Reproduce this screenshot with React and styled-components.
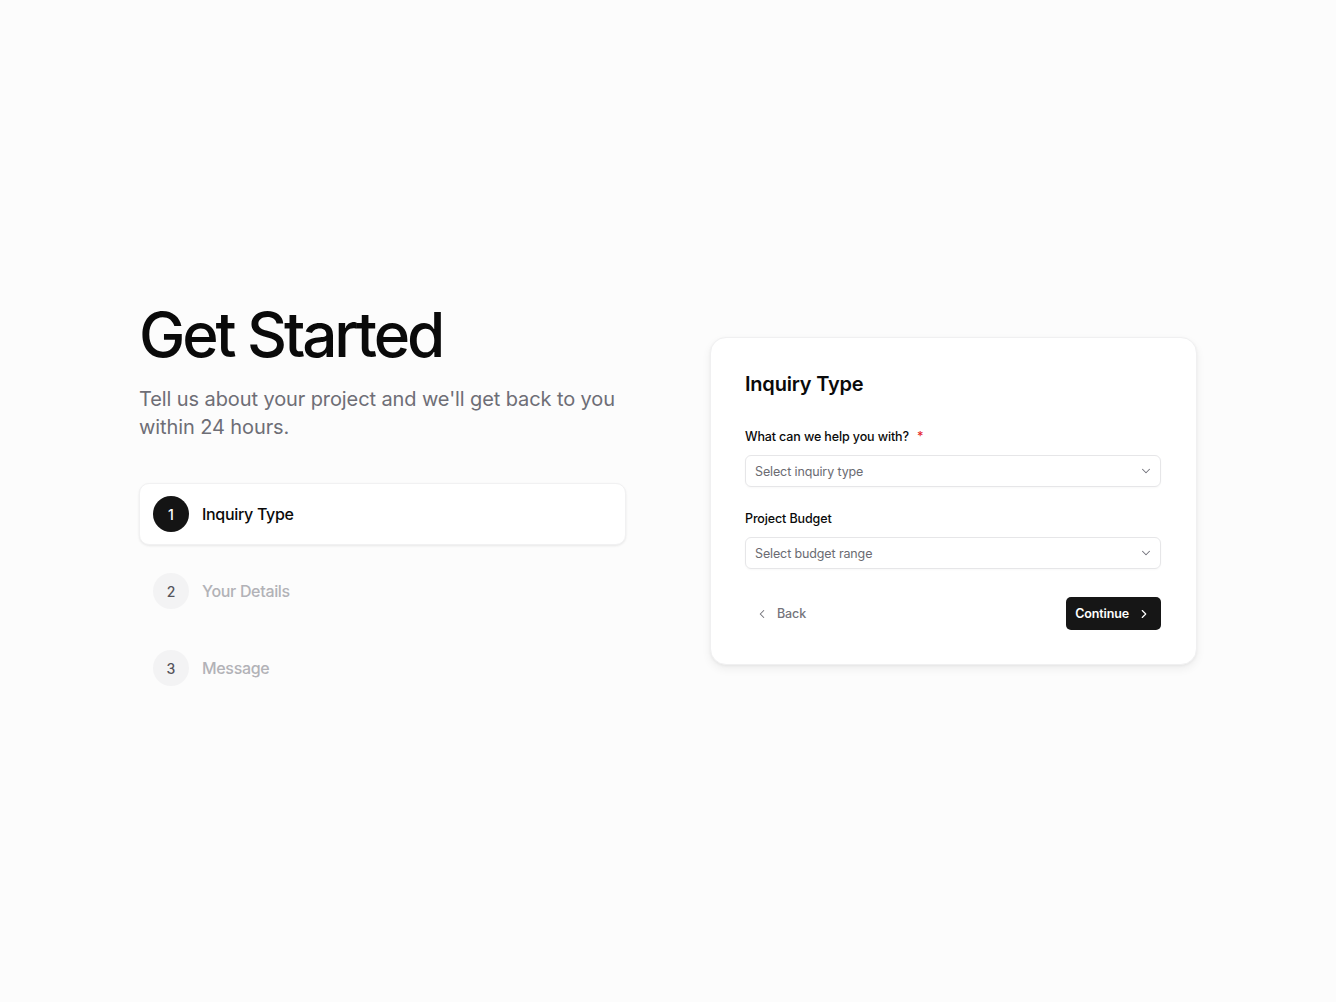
import React from "react";
import styled, { createGlobalStyle } from "styled-components";
import { ChevronDown, ChevronLeft, ChevronRight } from "lucide-react";

const GlobalStyle = createGlobalStyle`
  html, body {
    margin: 0;
    padding: 0;
    background: #fcfcfc;
    font-family: Inter, "Noto Sans", sans-serif;
    color: #0a0a0a;
    -webkit-font-smoothing: antialiased;
  }
  * { box-sizing: border-box; }
`;

const steps = [
  { id: 1, label: "Inquiry Type" },
  { id: 2, label: "Your Details" },
  { id: 3, label: "Message" },
];

const App = () => {
  const current = 1;
  return (
    <>
      <GlobalStyle />
      <StPage>
        <StLayout>
          <StIntro>
            <StTitle>Get Started</StTitle>
            <StLead>
              Tell us about your project and we'll get back to you within 24
              hours.
            </StLead>
            <StSteps>
              {steps.map((step) => (
                <StStep key={step.id} active={step.id === current}>
                  <StStepNum active={step.id === current}>{step.id}</StStepNum>
                  <StStepLabel active={step.id === current}>
                    {step.label}
                  </StStepLabel>
                </StStep>
              ))}
            </StSteps>
          </StIntro>

          <StCard>
            <StCardTitle>Inquiry Type</StCardTitle>
            <StField>
              <StLabel>
                What can we help you with?<StRequired>*</StRequired>
              </StLabel>
              <StSelect>
                <span>Select inquiry type</span>
                <ChevronDown size={14} strokeWidth={1.8} />
              </StSelect>
            </StField>
            <StField>
              <StLabel>Project Budget</StLabel>
              <StSelect>
                <span>Select budget range</span>
                <ChevronDown size={14} strokeWidth={1.8} />
              </StSelect>
            </StField>
            <StFooter>
              <StBack>
                <ChevronLeft size={14} strokeWidth={1.8} />
                Back
              </StBack>
              <StContinue>
                Continue
                <ChevronRight size={14} strokeWidth={2} />
              </StContinue>
            </StFooter>
          </StCard>
        </StLayout>
      </StPage>
    </>
  );
};

export default App;

const StPage = styled.div`
  min-height: 100vh;
  display: flex;
  align-items: center;
  justify-content: center;
`;

const StLayout = styled.div`
  width: 1058px;
  display: grid;
  grid-template-columns: 487px 487px;
  justify-content: space-between;
  align-items: center;
`;

const StIntro = styled.div`
  display: flex;
  flex-direction: column;
`;

const StTitle = styled.h1`
  margin: 0;
  font-size: 62px;
  line-height: 64px;
  font-weight: 500;
  letter-spacing: -0.05em;
  color: #0a0a0a;
`;

const StLead = styled.p`
  margin: 18px 0 0;
  font-size: 20px;
  line-height: 28px;
  color: #6e6e76;
  letter-spacing: -0.005em;
`;

const StSteps = styled.div`
  margin-top: 42px;
  display: flex;
  flex-direction: column;
  gap: 15px;
`;

const StStep = styled.div`
  display: flex;
  align-items: center;
  gap: 13px;
  padding: 12px 13px;
  border-radius: 10px;
  border: 1px solid ${({ active }) => (active ? "#f1f1f2" : "transparent")};
  background: ${({ active }) => (active ? "#ffffff" : "transparent")};
  box-shadow: ${({ active }) =>
    active ? "0 1px 3px rgba(0,0,0,0.06), 0 1px 2px rgba(0,0,0,0.03)" : "none"};
`;

const StStepNum = styled.div`
  width: 36px;
  height: 36px;
  border-radius: 50%;
  display: flex;
  align-items: center;
  justify-content: center;
  font-size: 14px;
  font-weight: 500;
  background: ${({ active }) => (active ? "#141414" : "#f3f3f4")};
  color: ${({ active }) => (active ? "#ffffff" : "#55555c")};
`;

const StStepLabel = styled.span`
  font-size: 16px;
  font-weight: 500;
  letter-spacing: -0.02em;
  color: ${({ active }) => (active ? "#0a0a0a" : "#b2b2b7")};
`;

const StCard = styled.div`
  background: #ffffff;
  border: 1px solid #f0f0f1;
  border-radius: 16px;
  padding: 33px 35px 34px 34px;
  box-shadow: 0 4px 10px rgba(0, 0, 0, 0.06), 0 1px 3px rgba(0, 0, 0, 0.05);
`;

const StCardTitle = styled.h2`
  margin: 0 0 30px;
  font-size: 20px;
  line-height: 26px;
  font-weight: 600;
  letter-spacing: -0.01em;
`;

const StField = styled.div`
  display: flex;
  flex-direction: column;
  gap: 8px;
  & + & {
    margin-top: 22px;
  }
`;

const StLabel = styled.label`
  font-size: 12.5px;
  line-height: 20px;
  font-weight: 500;
  letter-spacing: -0.01em;
  color: #0a0a0a;
`;

const StRequired = styled.span`
  color: #e5252a;
  margin-left: 8px;
`;

const StSelect = styled.div`
  height: 32px;
  display: flex;
  align-items: center;
  justify-content: space-between;
  padding: 0 7px 0 9px;
  border: 1px solid #e6e6e8;
  border-radius: 6px;
  font-size: 12.5px;
  letter-spacing: -0.01em;
  color: #6b6b72;
  box-shadow: 0 1px 2px rgba(0, 0, 0, 0.03);
  svg {
    color: #71717a;
  }
`;

const StFooter = styled.div`
  margin-top: 28px;
  display: flex;
  justify-content: space-between;
  align-items: center;
`;

const StBack = styled.button`
  border: none;
  background: transparent;
  display: flex;
  align-items: center;
  gap: 8px;
  padding: 0 10px;
  height: 33px;
  font-family: inherit;
  font-size: 12.5px;
  letter-spacing: -0.01em;
  font-weight: 500;
  color: #74747b;
  cursor: pointer;
`;

const StContinue = styled.button`
  border: none;
  background: #161616;
  color: #ffffff;
  height: 33px;
  padding: 0 10px 0 9px;
  border-radius: 5px;
  display: flex;
  align-items: center;
  gap: 8px;
  font-family: inherit;
  font-size: 12.5px;
  letter-spacing: -0.01em;
  font-weight: 600;
  cursor: pointer;
`;
